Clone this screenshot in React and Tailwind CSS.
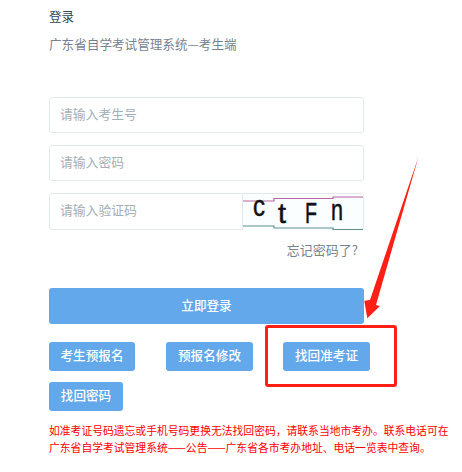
const font = { fontFamily: '"Noto Sans CJK SC", "Liberation Sans", sans-serif' };

function Captcha() {
  return (
    <svg width="120" height="37" viewBox="0 0 120 37" className="block shrink-0 overflow-visible">
      <rect width="120" height="37" fill="#fbfefe" />
      <path d="M0 7H31V4.5H90V3H120" stroke="#b565a8" strokeWidth="1.2" fill="none" />
      <path d="M0 32H31V34H90V35.5H120" stroke="#5f8f8c" strokeWidth="1.2" fill="none" />
      <text x="10" y="22" fontSize="30" textLength="12" lengthAdjust="spacingAndGlyphs" stroke="#111" strokeWidth="0.5" fontFamily="Liberation Sans" fill="#111">c</text>
      <text x="35" y="29" fontSize="28" textLength="8" lengthAdjust="spacingAndGlyphs" stroke="#111" strokeWidth="0.5" fontFamily="Liberation Sans" fill="#111">t</text>
      <text x="62" y="29" fontSize="29" textLength="12" lengthAdjust="spacingAndGlyphs" stroke="#111" strokeWidth="0.5" fontFamily="Liberation Sans" fill="#111">F</text>
      <text x="88" y="26" fontSize="29" textLength="12" lengthAdjust="spacingAndGlyphs" stroke="#111" strokeWidth="0.5" fontFamily="Liberation Sans" fill="#111">n</text>
    </svg>
  );
}

function SmallButton({ children }) {
  return (
    <button className="h-[29px] w-[87px] first:w-[86px] first:mr-px last:w-[74px] pb-[2px] rounded-[3px] bg-[#62a8ea] text-white text-[12.6px] font-medium whitespace-nowrap">
      {children}
    </button>
  );
}

export default function App() {
  return (
    <div className="relative w-[462px] h-[472px] bg-white overflow-hidden pl-[49px] pt-[6px]" style={font}>
      <h2 className="text-[12.6px] leading-[19px] font-normal text-[#37474f]">登录</h2>
      <p className="mt-[9px] text-[12.6px] leading-[19px] text-[#76838f]">广东省自学考试管理系统—考生端</p>

      <div className="w-[315px] mt-[44px] flex flex-col gap-[12px]">
        <input
          placeholder="请输入考生号"
          className="h-[36px] w-full border border-[#e4eaec] rounded-[3px] px-[10px] pb-[3px] text-[12.8px] placeholder:text-[#a3afb7]"
        />
        <input
          placeholder="请输入密码"
          className="h-[36px] w-full border border-[#e4eaec] rounded-[3px] px-[10px] pb-[3px] text-[12.8px] placeholder:text-[#a3afb7]"
        />
        <div className="h-[37px] flex border border-[#e4eaec] rounded-[3px]">
          <input
            placeholder="请输入验证码"
            className="flex-1 min-w-0 px-[10px] pb-[3px] text-[12.8px] border-r border-[#e4eaec] placeholder:text-[#a3afb7]"
          />
          <Captcha />
        </div>
      </div>

      <div className="w-[315px] mt-[10px] pr-[6px] text-right text-[13px] leading-[20px] text-[#76838f]">忘记密码了?</div>

      <button className="block w-[315px] h-[36px] mt-[28px] pb-[2px] rounded-[3px] bg-[#62a8ea] text-white text-[12.6px] font-medium">立即登录</button>

      <div className="w-[330px] mt-[18px] flex flex-wrap gap-x-[30px] gap-y-[11px]">
        <SmallButton>考生预报名</SmallButton>
        <SmallButton>预报名修改</SmallButton>
        <SmallButton>找回准考证</SmallButton>
        <SmallButton>找回密码</SmallButton>
      </div>

      <p className="w-[405px] mt-[11px] text-[10.8px] leading-[17px] text-[#ff0000]">
        如准考证号码遗忘或手机号码更换无法找回密码，请联系当地市考办。联系电话可在广东省自学考试管理系统——公告——广东省各市考办地址、电话一览表中查询。
      </p>

      {/* red annotation drawn over the page */}
      <div className="absolute left-[265px] top-[325px] w-[132px] h-[62px] border-[3px] border-[#ff2015] rounded-[3px]" />
      <svg className="absolute left-[360px] top-[150px]" width="60" height="175" viewBox="0 0 60 175">
        <path d="M58.5 6.7L16 155L20 156L7.3 168.3L4.3 150.7L10 150Z" fill="#ff2015" />
      </svg>
    </div>
  );
}
